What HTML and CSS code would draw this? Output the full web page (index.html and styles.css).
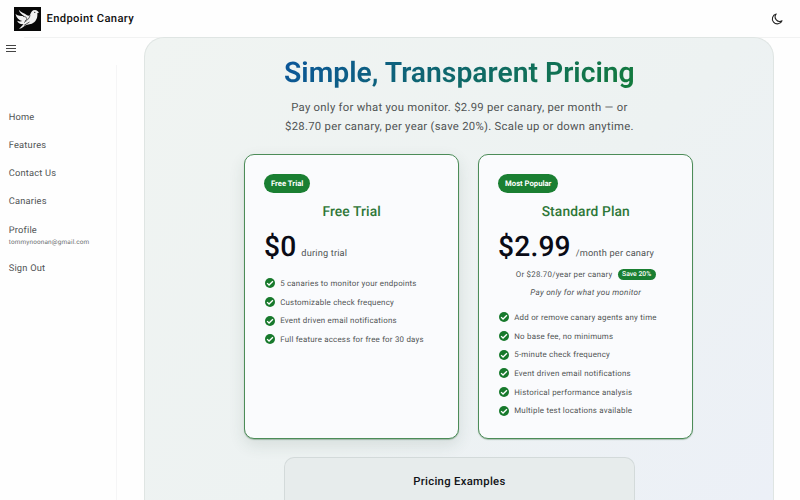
FILE: index.html
```
<!DOCTYPE html>
<html lang="en">
<head>
<meta charset="utf-8">
<title>Endpoint Canary</title>
<link rel="stylesheet" href="styles.css">
</head>
<body>
<svg width="0" height="0" class="defs" aria-hidden="true">
  <symbol id="check" viewBox="0 0 24 24"><circle cx="12" cy="12" r="12" fill="#17792c"/><path d="M5 12.3l4.7 4.7L19 7.9" fill="none" stroke="#fff" stroke-width="3.2"/></symbol>
</svg>
<header class="topbar">
  <svg class="logo" viewBox="0 0 27 24"><rect width="27" height="24" fill="#080808"/><path fill="#f2f2f2" d="M1.5 7C4 9.2 7 9 10.5 9.2C8 7.7 5.5 6 4.8 2.8C7 5.5 10 6 13 8.2C14 8.8 15 9 16 8C17 5 18 3 21 3C23 3 23.5 4.3 25 5.5L23.3 6.2C23.8 10 22.5 14 19 16C16 18 12.5 17.2 10.5 19C8.5 20.7 7 21.5 5 22L9.5 17.3C6 17.5 4 15.8 3.2 13.7C5 14.8 7 14.6 8.2 14C5 13.5 2.5 11 1.5 7Z"/><path d="M9 9.4C13 9.5 14 12 11 14M16 8.2C15.5 11 14 13 10 15.5M10 18.4L15.5 15" fill="none" stroke="#111" stroke-width=".7"/><circle cx="20.8" cy="5.3" r=".6"/></svg>
  <span class="brand">Endpoint Canary</span>
  <svg class="moon" viewBox="0 0 12 12"><path d="M5.2 1A5 5 0 1 0 11 7.7A4.5 4.5 0 0 1 5.2 1Z" fill="none" stroke="#222" stroke-width="1.1" stroke-linejoin="round"/></svg>
</header>
<div class="layout">
  <aside class="sidebar">
    <div class="menu"><i></i><i></i><i></i></div>
    <nav class="nav">
      <a>Home</a><a>Features</a><a>Contact Us</a><a>Canaries</a>
      <a class="profile">Profile<small>tommynoonan@gmail.com</small></a>
      <a>Sign Out</a>
    </nav>
  </aside>
  <main class="hero">
    <h1><span>Simple, Transparent Pricing</span></h1>
    <p class="lead">Pay only for what you monitor. $2.99 per canary, per month — or<br>$28.70 per canary, per year (save 20%). Scale up or down anytime.</p>
    <div class="cards">
      <section class="card raised">
        <span class="badge">Free Trial</span>
        <h2>Free Trial</h2>
        <div class="price"><b>$0</b><span>during trial</span></div>
        <ul>
          <li><svg><use href="#check"/></svg><span>5 canaries to monitor your endpoints</span></li>
          <li><svg><use href="#check"/></svg><span>Customizable check frequency</span></li>
          <li><svg><use href="#check"/></svg><span>Event driven email notifications</span></li>
          <li><svg><use href="#check"/></svg><span>Full feature access for free for 30 days</span></li>
        </ul>
      </section>
      <section class="card">
        <span class="badge">Most Popular</span>
        <h2>Standard Plan</h2>
        <div class="price"><b>$2.99</b><span>/month per canary</span></div>
        <div class="yearly"><span>Or $28.70/year per canary</span><em>Save 20%</em></div>
        <div class="note">Pay only for what you monitor</div>
        <ul>
          <li><svg><use href="#check"/></svg><span>Add or remove canary agents any time</span></li>
          <li><svg><use href="#check"/></svg><span>No base fee, no minimums</span></li>
          <li><svg><use href="#check"/></svg><span>5-minute check frequency</span></li>
          <li><svg><use href="#check"/></svg><span>Event driven email notifications</span></li>
          <li><svg><use href="#check"/></svg><span>Historical performance analysis</span></li>
          <li><svg><use href="#check"/></svg><span>Multiple test locations available</span></li>
        </ul>
      </section>
    </div>
    <section class="examples"><h3>Pricing Examples</h3></section>
  </main>
</div>
</body>
</html>
```
FILE: styles.css
```
* { box-sizing: border-box; }
html, body { height: 100%; }
body { margin: 0; overflow: hidden; background: #fefefe; font-family: Roboto, sans-serif; color: #505354; text-rendering: geometricPrecision; }
h1, h2, h3, p, ul { margin: 0; padding: 0; }
.defs { position: absolute; }
.topbar { display: flex; align-items: center; height: 37px; padding: 0 17.5px 0 13.5px; }
.logo { width: 27px; height: 24px; }
.brand { margin-left: 6px; font-size: 11.2px; font-weight: 500; letter-spacing: .36px; color: #111; }
.moon { width: 12px; height: 12px; margin-left: auto; }
.layout { display: flex; height: calc(100vh - 37px); background: linear-gradient(#f1f2f2, #f1f2f2) 24px 0 / 100% 1px no-repeat; }
.sidebar { display: flex; flex-direction: column; width: 117px; margin-right: 27.4px; flex: none; }
.menu { display: grid; gap: 2px; width: 10px; margin: 8px 0 0 6px; }
.menu i { height: 1px; background: #444; }
.nav { display: flex; flex-direction: column; flex: 1; margin-top: 13px; padding: 45px 0 0 8.7px; border-right: 1px solid #f5f5f6; }
.nav a { height: 28.1px; line-height: 16px; font-size: 9.3px; letter-spacing: .2px; }
.nav .profile { height: 38.8px; padding-top: .6px; }
.nav small { display: block; margin-top: -1px; font-size: 6.4px; line-height: 8px; letter-spacing: .17px; color: #6b6e70; }
.hero { display: flex; flex-direction: column; width: 630px; flex: none; padding-top: 17px; border: 1px solid #dfe5e3; border-bottom: 0; border-radius: 20px 20px 0 0; background: linear-gradient(135deg, #f0f4f2, #edf2f2 55%, #ecf0f7); }
h1 { height: 35px; text-align: center; font-size: 28.3px; line-height: 35px; font-weight: 600; }
h1 span { display: inline-block; color: transparent; background: linear-gradient(135deg, #0b559b, #137b3b); background-clip: text; -webkit-background-clip: text; }
.lead { margin-top: 8px; text-align: center; font-size: 11.3px; line-height: 19px; letter-spacing: .28px; white-space: nowrap; }
.cards { display: flex; gap: 18.9px; height: 284.5px; flex: none; margin: 18px 80px 0 98.6px; }
.card { width: 215.2px; flex: none; padding: 19px 18.8px 0 19px; border: 1.25px solid #4c8c58; border-radius: 10px; background: #fafbfd; box-shadow: 0 1px 1px #47755166; }
.raised { box-shadow: 0 1px 1px #47755166, 0 6px 16px #2b4b391f; }
.badge { display: inline-flex; align-items: center; height: 18.5px; padding: 0 7px; border-radius: 10px; background: #1a7f32; color: #fff; font-size: 7.7px; font-weight: 700; vertical-align: top; }
h2 { margin-top: 10px; text-align: center; font-size: 13.8px; line-height: 18px; font-weight: 500; letter-spacing: .12px; color: #2e7738; }
.price { display: flex; align-items: baseline; height: 36px; margin-top: 8px; white-space: nowrap; }
.price b { font-size: 28.2px; line-height: 36px; font-weight: 500; letter-spacing: .15px; color: #0a0b16; }
.price span { margin-left: 5px; font-size: 9.2px; letter-spacing: .18px; }
ul { margin-top: 9px; list-style: none; }
li { display: flex; align-items: center; height: 18.7px; font-size: 7.9px; letter-spacing: .22px; white-space: nowrap; }
li svg { width: 10px; height: 10px; margin: 0 5.5px 0 .7px; }
.yearly { display: flex; align-items: center; justify-content: center; height: 12px; font-size: 7.9px; letter-spacing: .22px; margin-top: 3.5px; white-space: nowrap; }
.yearly em { margin-left: 5px; height: 11px; padding: 0 4.5px; border-radius: 6px; background: #1a7f32; color: #fff; font-style: normal; font-weight: 500; font-size: 6.8px; line-height: 11px; letter-spacing: 0; }
.note { margin-top: 5px; text-align: center; font-size: 8.1px; line-height: 13px; letter-spacing: .24px; font-style: italic; }
.note + ul { margin-top: 9.5px; }
.examples { width: 351px; flex: 1; margin: 18px auto 0; padding-top: 16px; border: 1px solid #d3dada; border-bottom: 0; border-radius: 10px 10px 0 0; background: #e7ecec; }
h3 { text-align: center; font-size: 11.3px; line-height: 16px; font-weight: 500; letter-spacing: .31px; color: #101216; }
```
